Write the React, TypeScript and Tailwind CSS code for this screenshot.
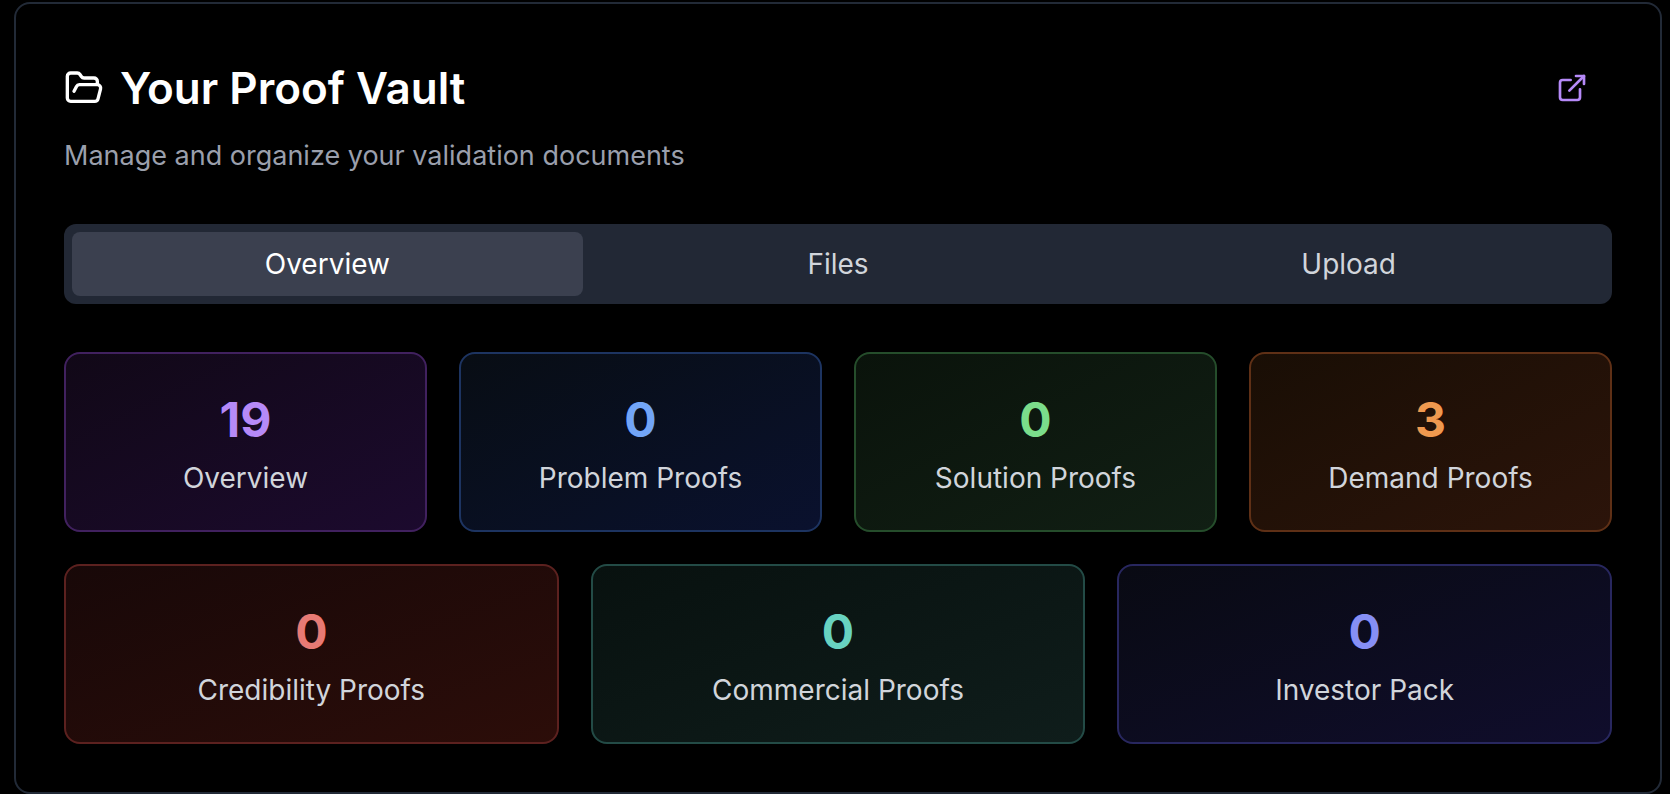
import { useState } from "react";
import { ExternalLink, FolderOpen } from "lucide-react";

type Stat = { label: string; value: number; card: string; number: string };

const primaryStats: Stat[] = [
  { label: "Overview", value: 19, card: "border-[#41215f] from-[#110817] to-[#1c0a2e]", number: "text-[#b68af8]" },
  { label: "Problem Proofs", value: 0, card: "border-[#1d3461] from-[#080d14] to-[#0a112e]", number: "text-[#72a5f7]" },
  { label: "Solution Proofs", value: 0, card: "border-[#254d2b] from-[#0a130b] to-[#111f14]", number: "text-[#7bdd8b]" },
  { label: "Demand Proofs", value: 3, card: "border-[#5f3016] from-[#190e05] to-[#2c140a]", number: "text-[#ef994f]" },
];

const secondaryStats: Stat[] = [
  { label: "Credibility Proofs", value: 0, card: "border-[#5c211f] from-[#180808] to-[#2c0d09]", number: "text-[#e87a74]" },
  { label: "Commercial Proofs", value: 0, card: "border-[#234b46] from-[#08110f] to-[#0f1d1b]", number: "text-[#68d3c1]" },
  { label: "Investor Pack", value: 0, card: "border-[#28275f] from-[#090a13] to-[#100d2c]", number: "text-[#868ff5]" },
];

const tabs = ["Overview", "Files", "Upload"];

function StatCard({ stat }: { stat: Stat }) {
  return (
    <div className={`rounded-2xl border-2 bg-linear-to-br p-8 text-center ${stat.card}`}>
      <div className={`text-[48px] leading-[68px] font-bold ${stat.number}`}>{stat.value}</div>
      <div className="mt-1 text-[28px] leading-10 text-[#d1d5db]">{stat.label}</div>
    </div>
  );
}

export default function App() {
  const [active, setActive] = useState("Overview");

  return (
    <main className="min-h-screen bg-black pt-[2px] pr-2 pl-[14px] font-['Inter',sans-serif]">
      <section className="rounded-2xl border-2 border-[#222a37] bg-black p-12">
        <header className="flex flex-col gap-3">
          <div className="flex items-center justify-between">
            <h2 className="flex items-center gap-4 text-[44px] leading-[48px] font-semibold text-white">
              <FolderOpen className="size-10" aria-hidden="true" />
              Your Proof Vault
            </h2>
            <button type="button" aria-label="Open vault" className="flex h-[72px] items-center px-6 text-[#b68af8]">
              <ExternalLink className="size-8" aria-hidden="true" />
            </button>
          </div>
          <p className="text-[27px] leading-10 text-[#9a9fac]">
            Manage and organize your validation documents
          </p>
        </header>

        <div role="tablist" className="mt-12 grid grid-cols-3 rounded-xl bg-[#222835] p-2">
          {tabs.map((tab) => (
            <button
              key={tab}
              type="button"
              role="tab"
              aria-selected={active === tab}
              onClick={() => setActive(tab)}
              className={`rounded-lg py-3 text-[28px] leading-10 ${
                active === tab ? "bg-[#3b404f] text-white" : "text-[#d1d5db]"
              }`}
            >
              {tab}
            </button>
          ))}
        </div>

        <div className="mt-12 grid grid-cols-4 gap-8">
          {primaryStats.map((stat) => (
            <StatCard key={stat.label} stat={stat} />
          ))}
        </div>
        <div className="mt-8 grid grid-cols-3 gap-8">
          {secondaryStats.map((stat) => (
            <StatCard key={stat.label} stat={stat} />
          ))}
        </div>
      </section>
    </main>
  );
}
